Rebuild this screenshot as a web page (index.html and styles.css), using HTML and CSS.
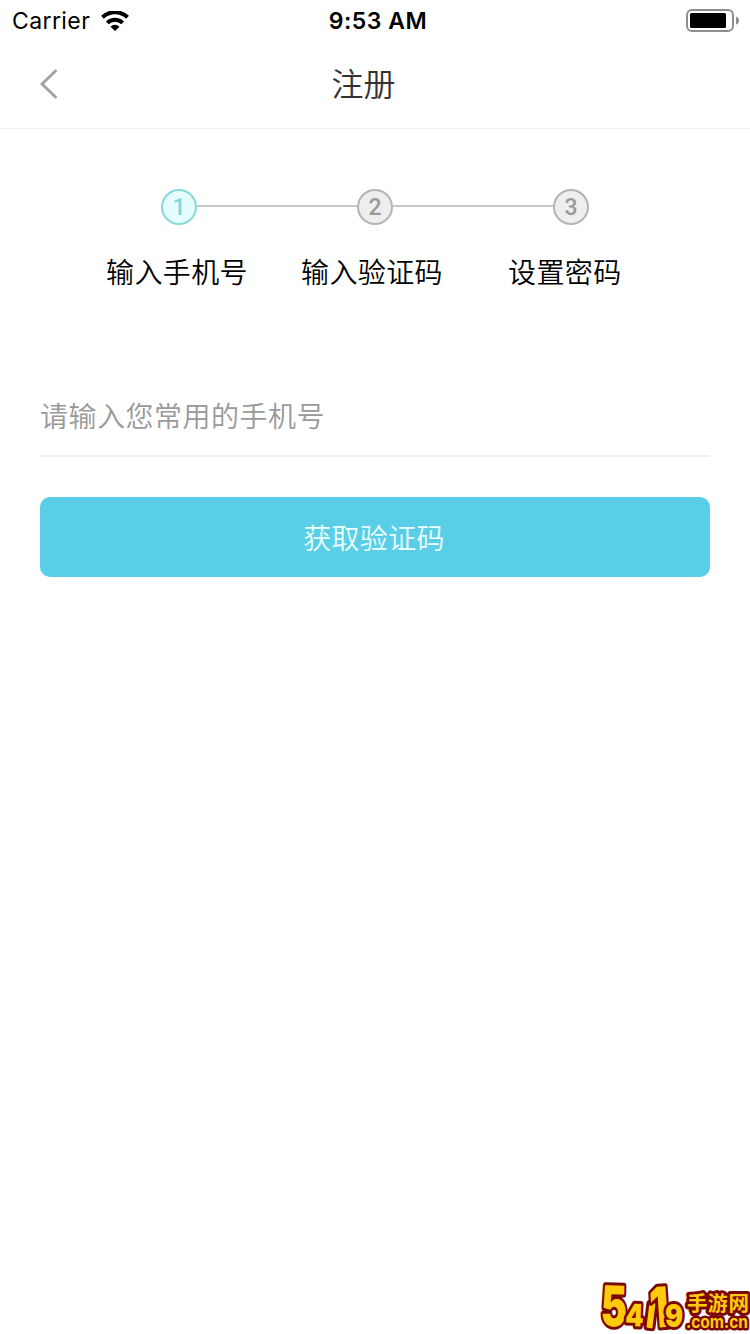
FILE: index.html
```html
<!DOCTYPE html>
<html lang="zh-CN">
<head>
<meta charset="utf-8">
<title>注册</title>
<link rel="stylesheet" href="styles.css">
</head>
<body>
<div class="screen">
  <div class="status">
    <div class="carrier"><span>Carrier</span>
      <svg class="wifi" width="28" height="20" viewBox="0 0 28 20"><g fill="none" stroke="#000" stroke-width="4"><path d="M1.400 6.300a18 18 0 0 1 25.200 0"/><path d="M6.300 11.900a11 11 0 0 1 15.400 0"/></g><path d="M9.500 15.800a6.200 6.200 0 0 1 9 0L14 20z"/></svg>
    </div>
    <div class="time">9:53 AM</div>
    <svg class="battery" width="53" height="24" viewBox="0 0 53 24"><rect x="1" y="1" width="46" height="21" rx="5" fill="#fff" stroke="#8e8e8e" stroke-width="2"/><rect x="4" y="4" width="36" height="15" rx="1.500"/><path d="M50 7.500q3 1 3 4t-3 4z" fill="#8e8e8e"/></svg>
  </div>
  <header class="nav">
    <svg class="back" width="18" height="30" viewBox="0 0 18 30"><path d="M16.500 1L2 15l14.500 14" fill="none" stroke="#a0a0a0" stroke-width="2.800"/></svg>
    <h1 class="title">注册</h1>
  </header>
  <main class="content">
    <div class="track">
      <span class="dot active">1</span><span class="line"></span><span class="dot">2</span><span class="line"></span><span class="dot">3</span>
    </div>
    <div class="labels"><span>输入手机号</span><span>输入验证码</span><span>设置密码</span></div>
    <div class="field">请输入您常用的手机号</div>
    <button class="submit">获取验证码</button>
  </main>
  <svg class="mark" width="150" height="54" viewBox="600 1280 150 54">
    <g class="glyphs">
      <text class="digit" transform="translate(600.500 1326) rotate(1) scale(.7 1)" font-size="56">5</text>
      <text class="digit" transform="translate(625 1326) rotate(2) scale(.84 1)" font-size="31">4</text>
      <rect x="648" y="1303" width="6" height="25" rx="1" transform="rotate(7 651 1315)"/>
      <text class="digit" transform="translate(651 1328) rotate(-4) scale(.76 1)" font-size="56">1</text>
      <text class="digit" transform="translate(665 1327) scale(.84 1)" font-size="32">9</text>
      <text class="site" x="687" y="1311" font-size="20.500" textLength="62">手游网</text>
      <text class="digit domain" x="686" y="1328" font-size="17" textLength="62" lengthAdjust="spacingAndGlyphs">.com.cn</text>
    </g>
  </svg>
</div>
</body>
</html>
```
FILE: styles.css
```css
* { box-sizing: border-box; }
body { margin: 0; background: #fff; font-family: Inter, "Noto Sans CJK SC", sans-serif; }
.screen { position: relative; width: 750px; height: 1334px; overflow: hidden; background: #fff; }
.status { height: 40px; display: grid; grid-template-columns: 1fr auto 1fr; align-items: center; padding: 1px 11px 0 12px; }
.carrier { display: flex; align-items: center; gap: 11px; font-size: 23px; letter-spacing: .4px; }
.wifi { display: block; }
.time { font-size: 23px; font-weight: 600; letter-spacing: .55px; padding-left: 5px; }
.battery { justify-self: end; }
.nav { height: 89px; display: grid; grid-template-columns: 40px 1fr 64px; align-items: center; padding: 0 0 0 40px; border-bottom: 1px solid #f0f0f0; }
.back { display: block; }
.title { margin: 0; padding: 0 39px 3px 0; font-family: "Noto Sans CJK SC DemiLight", "Noto Sans CJK SC", sans-serif; font-size: 32px; font-weight: 350; color: #333; text-align: center; line-height: 85px; }
.content { padding: 60px 40px 0; }
.track { display: flex; align-items: center; width: 428px; margin: 0 auto; }
.dot { width: 36px; height: 36px; border: 2px solid #b4b4b4; border-radius: 50%; background: #eee; color: #999; font: 500 23px/34px Roboto, sans-serif; text-align: center; }
.dot.active { border-color: #87d9d9; background: #e6fdff; color: #7ad5dc; }
.line { flex: 1; height: 2px; margin-bottom: 2px; background: #c8c8c8; }
.labels { display: flex; margin: 26px 0 0 66px; font-family: "Noto Sans CJK SC DemiLight", "Noto Sans CJK SC", sans-serif; font-size: 28px; font-weight: 350; line-height: 40px; letter-spacing: .4px; color: #000; }
.labels span { width: 195px; }
.labels span:last-child { padding-left: 12px; }
.field { margin-top: 82px; height: 84px; border-bottom: 2px solid #f0f0f0; font-family: "Noto Sans CJK SC DemiLight", "Noto Sans CJK SC", sans-serif; font-size: 28px; font-weight: 350; line-height: 84px; letter-spacing: .5px; color: #999; }
.submit { display: block; width: 100%; height: 80px; margin-top: 40px; padding: 0 2px 0 0; border: 0; border-radius: 10px; background: #5acee6; color: #eaffff; font: 350 28px/80px "Noto Sans CJK SC DemiLight", "Noto Sans CJK SC", sans-serif; letter-spacing: .3px; }
.mark { position: absolute; right: 0; bottom: 0; }
.glyphs { fill: #ffc90c; stroke: #7b0808; stroke-width: 6px; paint-order: stroke; stroke-linejoin: round; }
.digit { font-family: Inter, sans-serif; font-weight: 900; }
.site { font-family: "Noto Sans CJK SC", sans-serif; font-weight: 700; }
.domain { stroke-width: 5px; font-weight: 700; }
```
